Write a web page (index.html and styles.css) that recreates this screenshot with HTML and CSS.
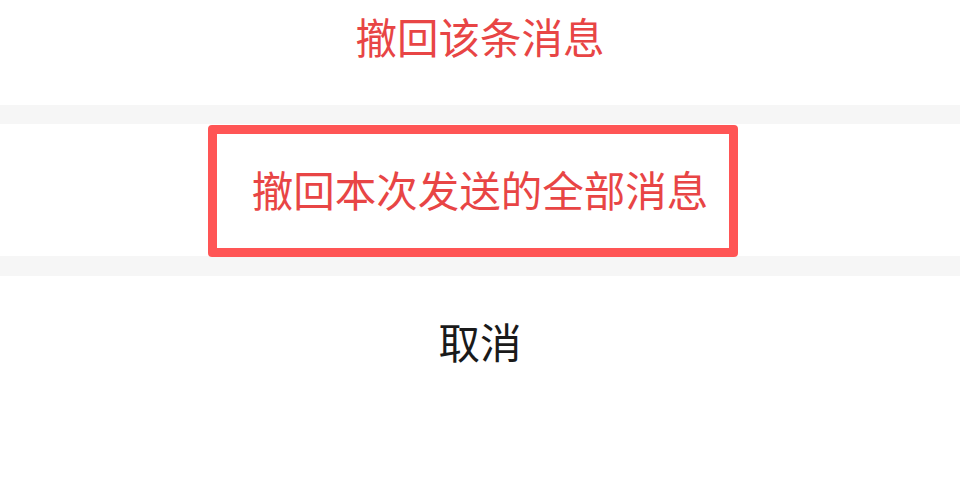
FILE: index.html
```html
<!DOCTYPE html>
<html lang="zh-CN">
<head>
<meta charset="utf-8">
<title>撤回消息</title>
<link rel="stylesheet" href="styles.css">
</head>
<body>
<div class="sheet">
  <div class="item item-first warn">撤回该条消息</div>
  <div class="gap"></div>
  <div class="item item-mid warn">
    撤回本次发送的全部消息
    <div class="highlight"></div>
  </div>
  <div class="gap"></div>
  <div class="item item-cancel">取消</div>
</div>
</body>
</html>
```
FILE: styles.css
```css
html, body {
  margin: 0;
  padding: 0;
  background: #ffffff;
}
body {
  width: 960px;
  height: 492px;
  overflow: hidden;
  font-family: "Noto Sans CJK SC", "Noto Sans", sans-serif;
}
.sheet {
  display: flex;
  flex-direction: column;
}
.item {
  background: #ffffff;
  text-align: center;
  font-size: 41.5px;
  color: #1a1a1a;
}
.warn {
  color: #e84545;
}
.item-first {
  height: 105px;
  line-height: 73px;
}
.item-mid {
  position: relative;
  height: 132px;
  line-height: 130px;
}
.item-cancel {
  height: 216px;
  line-height: 130px;
}
.gap {
  height: 19px;
  background: #f6f6f6;
}
.item-mid + .gap {
  height: 20px;
}
.highlight {
  position: absolute;
  left: 208px;
  top: 1px;
  width: 530px;
  height: 132px;
  box-sizing: border-box;
  border: 9px solid #ff5555;
  border-radius: 4px;
  pointer-events: none;
}
```
